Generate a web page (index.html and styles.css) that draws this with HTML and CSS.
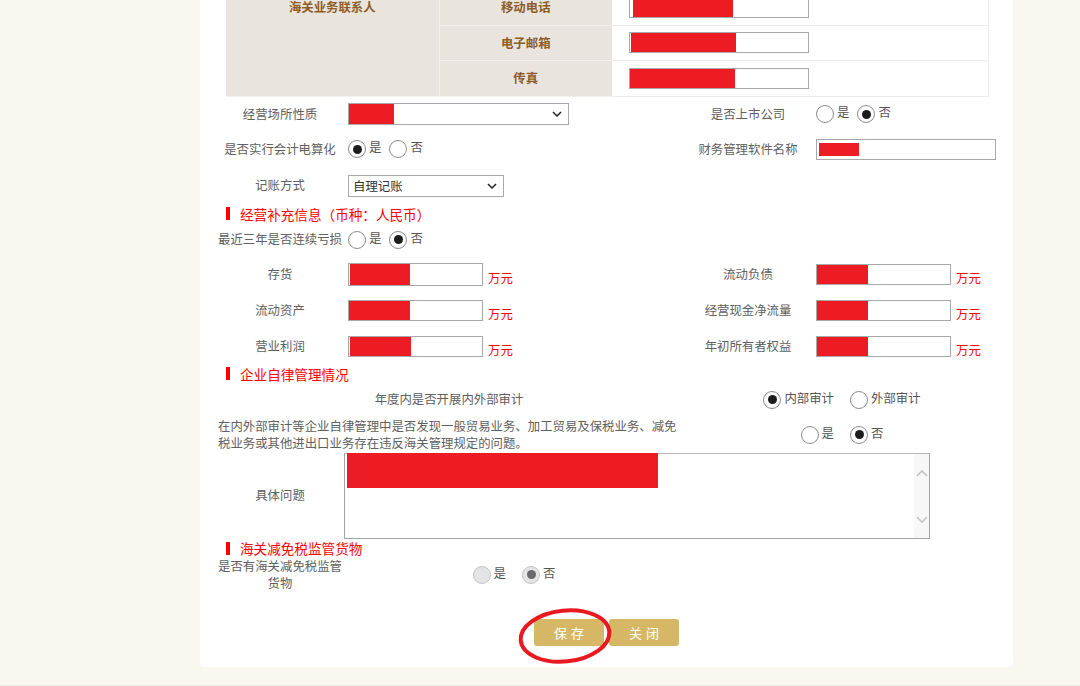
FILE: index.html
```html
<!DOCTYPE html>
<html lang="zh-CN">
<head>
<meta charset="utf-8">
<title>经营信息</title>
<link rel="stylesheet" href="styles.css">
</head>
<body>
<div class="page">
  <div class="card">
    <table class="contact">
      <colgroup><col class="c1"><col class="c2"><col class="c3"></colgroup>
      <tr class="tr35">
        <td class="lbl rowhead" rowspan="3">海关业务联系人</td>
        <td class="lbl">移动电话</td>
        <td class="val"><div class="inp w180"><span class="red r100 ml3"></span></div></td>
      </tr>
      <tr class="tr35">
        <td class="lbl">电子邮箱</td>
        <td class="val"><div class="inp w180"><span class="red r105 ml1"></span></div></td>
      </tr>
      <tr class="tr36">
        <td class="lbl">传真</td>
        <td class="val"><div class="inp w180"><span class="red r105"></span></div></td>
      </tr>
    </table>

    <div class="form">
      <div class="row h35">
        <div class="lab">经营场所性质</div>
        <div><div class="select s-wide"><span class="red r45"></span><svg class="chev" width="10" height="6" viewBox="0 0 10 6"><path d="M1 1 L5 5 L9 1" fill="none" stroke="#222" stroke-width="1.5"/></svg></div></div>
        <div class="lab">是否上市公司</div>
        <div class="radios"><span class="radio"><span class="dot"></span><span class="rt">是</span></span><span class="radio"><span class="dot on"></span><span class="rt">否</span></span></div>
      </div>
      <div class="row h35">
        <div class="lab">是否实行会计电算化</div>
        <div class="radios"><span class="radio"><span class="dot on"></span><span class="rt">是</span></span><span class="radio"><span class="dot"></span><span class="rt">否</span></span></div>
        <div class="lab">财务管理软件名称</div>
        <div><div class="inp w180 inset"><span class="red r40"></span></div></div>
      </div>
      <div class="row h38">
        <div class="lab">记账方式</div>
        <div><div class="select s-mid"><span class="seltext">自理记账</span><svg class="chev" width="10" height="6" viewBox="0 0 10 6"><path d="M1 1 L5 5 L9 1" fill="none" stroke="#222" stroke-width="1.5"/></svg></div></div>
      </div>

      <div class="sec h18"><i class="bar"></i>经营补充信息（币种：人民币）</div>

      <div class="row h34">
        <div class="lab">最近三年是否连续亏损</div>
        <div class="radios"><span class="radio"><span class="dot"></span><span class="rt">是</span></span><span class="radio"><span class="dot on"></span><span class="rt">否</span></span></div>
      </div>
      <div class="row h36">
        <div class="lab">存货</div>
        <div class="money"><div class="inp w135 tall"><span class="red r60 ml1"></span></div><span class="unit">万元</span></div>
        <div class="lab">流动负债</div>
        <div class="money"><div class="inp w135"><span class="red r51"></span></div><span class="unit">万元</span></div>
      </div>
      <div class="row h36">
        <div class="lab">流动资产</div>
        <div class="money"><div class="inp w135"><span class="red r61"></span></div><span class="unit">万元</span></div>
        <div class="lab">经营现金净流量</div>
        <div class="money"><div class="inp w135"><span class="red r51"></span></div><span class="unit">万元</span></div>
      </div>
      <div class="row h36">
        <div class="lab">营业利润</div>
        <div class="money"><div class="inp w135"><span class="red r61 ml1"></span></div><span class="unit">万元</span></div>
        <div class="lab">年初所有者权益</div>
        <div class="money"><div class="inp w135"><span class="red r51"></span></div><span class="unit">万元</span></div>
      </div>

      <div class="sec h18"><i class="bar"></i>企业自律管理情况</div>

      <div class="row h34">
        <div class="lab span2">年度内是否开展内外部审计</div>
        <div class="radios spread center span2"><span class="radio"><span class="dot on"></span><span class="rt">内部审计</span></span><span class="radio"><span class="dot"></span><span class="rt">外部审计</span></span></div>
      </div>
      <div class="row h36">
        <div class="longtext span2">在内外部审计等企业自律管理中是否发现一般贸易业务、加工贸易及保税业务、减免税业务或其他进出口业务存在违反海关管理规定的问题。</div>
        <div class="radios spread center span2"><span class="radio"><span class="dot"></span><span class="rt">是</span></span><span class="radio"><span class="dot on"></span><span class="rt">否</span></span></div>
      </div>
      <div class="row-ta">
        <div class="lab">具体问题</div>
        <div class="textarea">
          <span class="red r311 ta-red"></span>
          <div class="scrollbar">
            <svg width="12" height="8" viewBox="0 0 12 8"><path d="M1 7 L6 2 L11 7" fill="none" stroke="#c4c4c4" stroke-width="1.6"/></svg>
            <svg width="12" height="8" viewBox="0 0 12 8"><path d="M1 1 L6 6 L11 1" fill="none" stroke="#c4c4c4" stroke-width="1.6"/></svg>
          </div>
        </div>
      </div>

      <div class="sec h19"><i class="bar"></i>海关减免税监管货物</div>

      <div class="row h34">
        <div class="lab">是否有海关减免税监管<br>货物</div>
        <div class="radios spread center"><span class="radio"><span class="dot dis"></span><span class="rt">是</span></span><span class="radio"><span class="dot dis on"></span><span class="rt">否</span></span></div>
      </div>
    </div>

    <div class="actions">
      <button class="btn">保存</button>
      <button class="btn">关闭</button>
      <svg class="mark" width="100" height="62" viewBox="0 0 100 62"><ellipse cx="50" cy="31" rx="44.5" ry="25.5" fill="none" stroke="#e8191f" stroke-width="4" transform="rotate(-6 50 31)"/></svg>
    </div>
  </div>
  <div class="footer-line"></div>
</div>
</body>
</html>
```

FILE: styles.css
```css
* { box-sizing: border-box; }
html, body { margin: 0; padding: 0; }
body {
  background: #faf7f0;
  font-family: "Noto Sans CJK SC", "Microsoft YaHei", "Noto Sans", sans-serif;
  font-size: 12.4px;
  color: #606060;
  overflow: hidden;
  height: 686px;
}
.page { margin-top: -10px; }
.card {
  margin-left: 200px;
  width: 813px;
  background: #fff;
  border-radius: 0 0 5px 5px;
}

/* contact table */
.contact {
  margin-left: 26px;
  width: 762px;
  border-collapse: collapse;
  table-layout: fixed;
}
.contact .c1 { width: 213px; }
.contact .c2 { width: 173px; }
.contact .c3 { width: 376px; }
.contact td { padding: 0; }
.tr35 td { height: 35px; }
.tr36 td { height: 36px; }
.contact .lbl {
  background: #e9e4de;
  color: #8e5d26;
  font-weight: bold;
  text-align: center;
  border-bottom: 1px solid #f3f0ec;
  border-left: 1px solid #f3f0ec;
}
.contact .rowhead { vertical-align: top; line-height: 35px; border-left: 0; }
.contact .val {
  border-bottom: 1px solid #ececec;
  border-right: 1px solid #ececec;
  padding-left: 17px;
}

/* inputs */
.inp {
  height: 21px;
  border: 1px solid #a8a8a8;
  background: #fff;
  display: flex;
  align-items: stretch;
}
.inp.tall { height: 23px; }
.inp.inset { padding: 3px 0; }
.w180 { width: 180px; }
.w135 { width: 135px; }
.red { display: block; background: #ed1c24; height: 100%; flex: none; }
.ml1 { margin-left: 1px; }
.ml3 { margin-left: 3px; }
.inset .red { margin-left: 2px; }
.r40 { width: 40px; }
.r45 { width: 45px; }
.r51 { width: 51px; }
.r60 { width: 60px; }
.r61 { width: 61px; }
.r100 { width: 100px; }
.r105 { width: 105px; }
.r311 { width: 311px; }

.select {
  height: 22px;
  border: 1px solid #a8a8a8;
  background: #fff;
  display: flex;
  align-items: stretch;
  justify-content: space-between;
  padding-right: 6px;
}
.s-wide { width: 221px; }
.s-mid { width: 156px; }
.select .chev { align-self: center; }
.seltext { color: #333; padding-left: 4px; line-height: 20px; }

/* form grid */
.form { padding-left: 18px; }
.row {
  display: grid;
  grid-template-columns: 124px 332px 124px 182px;
  column-gap: 6px;
  align-items: center;
}
.h34 { height: 34px; }
.h35 { height: 35px; }
.h36 { height: 36px; }
.h38 { height: 38px; }
.h18 { height: 18px; }
.h19 { height: 19px; }
.lab { text-align: center; line-height: 17px; white-space: nowrap; }
.span2 { grid-column: span 2; }
.longtext { line-height: 17px; text-align: left; }

.sec {
  display: flex;
  align-items: center;
  padding-left: 8px;
  color: #ff0000;
  font-size: 13.6px;
}
.sec .bar {
  display: block;
  width: 4px;
  height: 13px;
  background: #ff0000;
  margin-right: 10px;
}

/* radios */
.radios { display: flex; align-items: center; gap: 8px; }
.radios.spread { gap: 16px; }
.radios.center { justify-content: center; }
.radio { display: flex; align-items: center; }
.dot {
  width: 18px;
  height: 18px;
  border: 1px solid #8c8c8c;
  border-radius: 50%;
  background: #fff;
  display: flex;
  align-items: center;
  justify-content: center;
  margin-right: 3px;
}
.dot.on::after {
  content: "";
  width: 9px;
  height: 9px;
  border-radius: 50%;
  background: #1c1c1c;
}
.dot.dis { background: #e4e4e4; border-color: #c4c4c4; }
.dot.dis.on::after { background: #6a6a6a; }
.rt { margin-bottom: 4px; color: #555; }

/* money */
.money { display: flex; align-items: center; }
.unit { color: #ff0000; margin-left: 5px; margin-top: 6px; }

/* textarea */
.row-ta {
  display: grid;
  grid-template-columns: 124px 586px;
  column-gap: 2px;
  height: 86px;
  align-items: start;
}
.row-ta .lab { align-self: center; }
.textarea {
  height: 86px;
  border: 1px solid #a4a4a4;
  border-top-color: #b8b8b8;
  background: #fff;
  display: flex;
  justify-content: space-between;
}
.ta-red { height: 35px; margin-left: 2px; margin-top: -1px; }
.scrollbar {
  width: 15px;
  background: #f7f7f7;
  display: flex;
  flex-direction: column;
  align-items: center;
  justify-content: space-between;
  padding: 15px 0 14px;
}

/* actions */
.actions {
  position: relative;
  display: flex;
  justify-content: center;
  gap: 5px;
  padding: 27px 0 21px;
}
.btn {
  width: 70px;
  height: 27px;
  border: 0;
  border-radius: 3px;
  background: #d5b766;
  color: #fff;
  font-family: "Noto Sans CJK SC", "Microsoft YaHei", sans-serif;
  font-size: 13px;
  letter-spacing: 4px;
  padding: 0 0 0 4px;
}
.mark {
  position: absolute;
  left: 315px;
  top: 13px;
}

.footer-line {
  margin-top: 18px;
  border-top: 2px solid #e6e6e6;
}
```
